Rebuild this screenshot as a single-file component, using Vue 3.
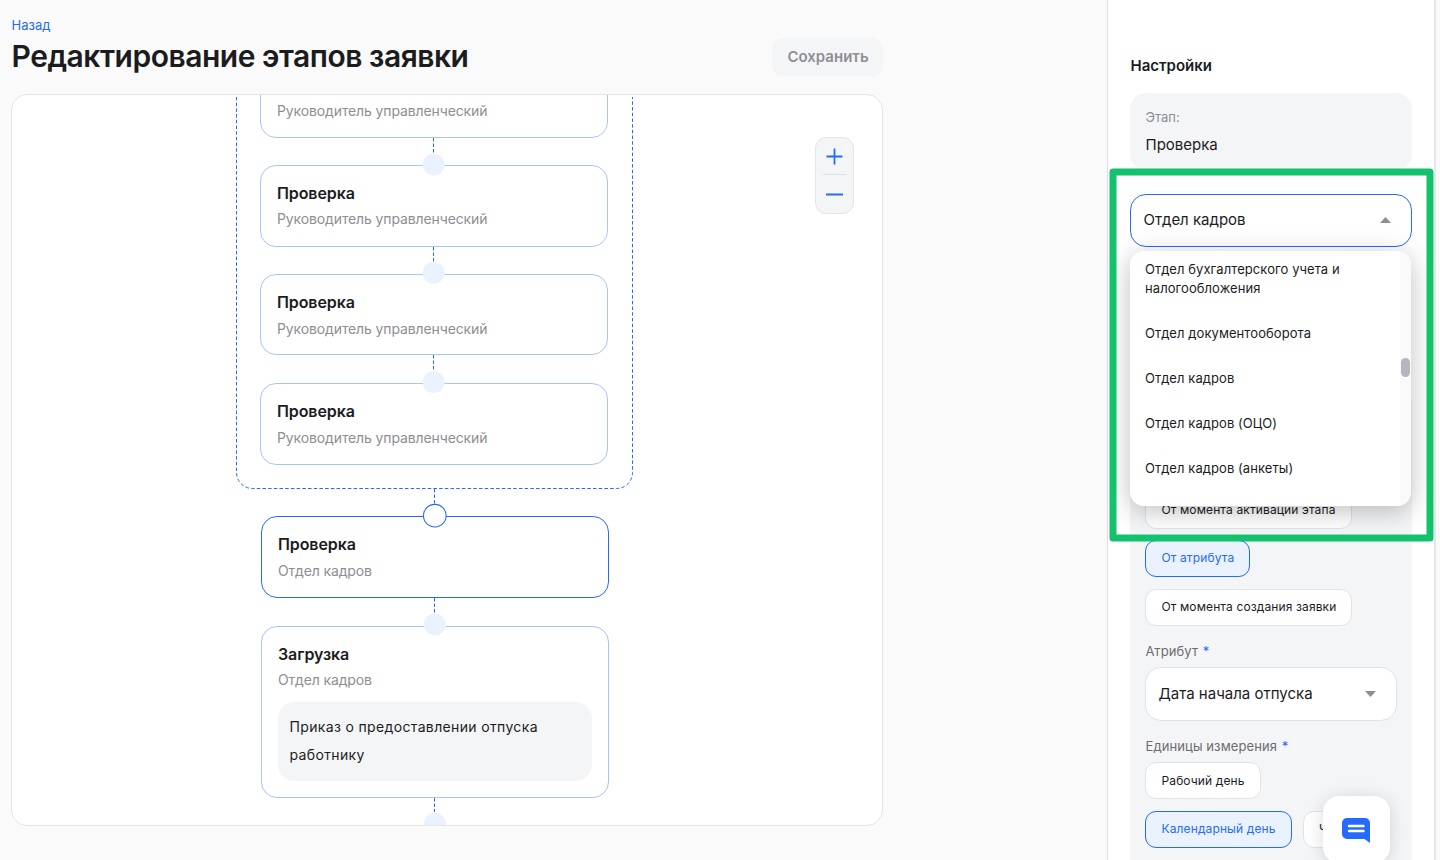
<template>
  <div class="page">
    <main class="main">
      <a class="back" href="#">Назад</a>
      <header class="header">
        <h1 class="title">Редактирование этапов заявки</h1>
        <button class="save" disabled>Сохранить</button>
      </header>

      <section class="canvas">
        <svg class="edges" width="870" height="730" viewBox="12 95 870 730">
          <path class="group" d="M236.5 97V472.5a16 16 0 0 0 16 16H616.5a16 16 0 0 0 16-16V97" />
          <line v-for="(edge, i) in edges" :key="i" class="edge" :x1="edge.x" :x2="edge.x" :y1="edge.from" :y2="edge.to" />
        </svg>

        <div
          v-for="node in nodes"
          :key="node.id"
          class="node"
          :class="{ active: node.active, tight: node.tight, clipped: !node.title }"
          :style="{ left: node.x + 'px', top: node.y + 'px', height: node.h + 'px' }"
        >
          <div v-if="node.title" class="node-title">{{ node.title }}</div>
          <div class="node-role">{{ node.role }}</div>
          <div v-if="node.doc" class="node-doc">{{ node.doc }}</div>
        </div>

        <svg class="edges" width="870" height="730" viewBox="12 95 870 730">
          <circle
            v-for="(port, i) in ports"
            :key="i"
            :class="port.active ? 'port-active' : 'port'"
            :cx="port.x"
            :cy="port.y"
            :r="port.active ? 11.3 : 11"
          />
        </svg>

        <div class="zoom">
          <button class="zoom-btn" aria-label="Увеличить">
            <svg width="17" height="17" viewBox="0 0 17 17"><path d="M8.5 .5v16M.5 8.5h16" /></svg>
          </button>
          <span class="zoom-line"></span>
          <button class="zoom-btn" aria-label="Уменьшить">
            <svg width="17" height="17" viewBox="0 0 17 17"><path d="M0 8.5h17" /></svg>
          </button>
        </div>
      </section>
    </main>

    <aside class="panel">
      <h2 class="panel-title">Настройки</h2>
      <div class="stage">
        <div class="stage-label">Этап:</div>
        <div class="stage-name">Проверка</div>
      </div>

      <div class="department">
        <div class="select open">
          <span>{{ selected }}</span>
          <svg width="11" height="6" viewBox="0 0 11 6"><path d="M0 6 5.5 0 11 6z" /></svg>
        </div>
        <div class="menu">
          <ul class="menu-list">
            <li v-for="item in departments" :key="item" @click="selected = item">{{ item }}</li>
          </ul>
          <div class="track"><div class="thumb"></div></div>
        </div>
      </div>

      <div class="term">
        <div class="chips column">
          <button
            v-for="item in starts"
            :key="item"
            class="chip"
            :class="{ checked: item === start }"
            @click="start = item"
          >{{ item }}</button>
        </div>
        <div class="label">Атрибут <i>*</i></div>
        <div class="select">
          <span>Дата начала отпуска</span>
          <svg class="arrow-down" width="11" height="6" viewBox="0 0 11 6"><path d="M0 0 5.5 6 11 0z" /></svg>
        </div>
        <div class="label">Единицы измерения <i>*</i></div>
        <div class="chips">
          <button
            v-for="item in units"
            :key="item"
            class="chip"
            :class="{ checked: item === unit }"
            @click="unit = item"
          >{{ item }}</button>
        </div>
      </div>
    </aside>

    <svg class="highlight" width="326" height="376" viewBox="0 0 326 376">
      <rect x="5" y="5" width="317" height="366" />
    </svg>

    <button class="chat" aria-label="Чат">
      <svg width="28" height="25" viewBox="0 0 28 25">
        <path fill="#246bfd" d="M5 0h18a5 5 0 0 1 5 5v20l-5.500-4H5a5 5 0 0 1-5-5V5a5 5 0 0 1 5-5z" />
        <path stroke="#fff" stroke-width="2.400" stroke-linecap="round" d="M7 8h14.500M7 13h14.500" />
      </svg>
    </button>
  </div>
</template>

<script setup>
import { ref } from 'vue';

const manager = 'Руководитель управленческий';

// координаты узлов относительно холста
const nodes = [
  { id: 1, x: 248, y: -18, h: 61, role: manager },
  { id: 2, x: 248, y: 70, h: 82, title: 'Проверка', role: manager, tight: true },
  { id: 3, x: 248, y: 179, h: 81, title: 'Проверка', role: manager },
  { id: 4, x: 248, y: 288, h: 82, title: 'Проверка', role: manager },
  { id: 5, x: 249, y: 421, h: 82, title: 'Проверка', role: 'Отдел кадров', active: true },
  { id: 6, x: 249, y: 531, h: 172, title: 'Загрузка', role: 'Отдел кадров', doc: 'Приказ о предоставлении отпуска работнику', tight: true },
];

const edges = [
  { x: 433.5, from: 138, to: 154 },
  { x: 433.5, from: 247, to: 262 },
  { x: 433.5, from: 355, to: 371 },
  { x: 434.5, from: 489, to: 504 },
  { x: 434.5, from: 598, to: 613 },
  { x: 434.5, from: 798, to: 812 },
];

const ports = [
  { x: 433.7, y: 164.5 },
  { x: 433.7, y: 272.8 },
  { x: 433.7, y: 382 },
  { x: 434.8, y: 515.7, active: true },
  { x: 434.8, y: 624.5 },
  { x: 434.8, y: 823.8 },
];

const departments = [
  'Отдел бухгалтерского учета и налогообложения',
  'Отдел документооборота',
  'Отдел кадров',
  'Отдел кадров (ОЦО)',
  'Отдел кадров (анкеты)',
];
const selected = ref('Отдел кадров');

const starts = ['От момента активации этапа', 'От атрибута', 'От момента создания заявки'];
const start = ref('От атрибута');

const units = ['Рабочий день', 'Календарный день', 'Час'];
const unit = ref('Календарный день');
</script>

<style>
body {
  background: #fafafa;
  overflow: hidden;
}
</style>

<style scoped>
* { box-sizing: border-box; }

.page {
  position: relative;
  display: flex;
  justify-content: space-between;
  width: 1440px;
  height: 860px;
  overflow: hidden;
  font-family: Inter, "Liberation Sans", sans-serif;
  color: #1c1c1e;
  background: #fafafa;
}
button { font-family: inherit; cursor: pointer; }

.main {
  width: 883px;
  padding: 16px 0 0 11px;
}
.back {
  display: block;
  height: 18px;
  padding-left: 0.5px;
  font-size: 13px;
  line-height: 18px;
  color: #246bfd;
  text-decoration: none;
}
.header {
  display: flex;
  justify-content: space-between;
  align-items: center;
  height: 44px;
}
.title {
  margin: 0;
  padding-left: 0.5px;
  font-size: 30px;
  font-weight: 600;
  line-height: 40px;
  letter-spacing: -0.48px;
}
.save {
  width: 111px;
  height: 38px;
  margin-top: 2px;
  padding: 0 0 2px 1px;
  border: 0;
  border-radius: 11px;
  background: #f4f5f7;
  color: #8e8e93;
  font-size: 15px;
  font-weight: 600;
}

.canvas {
  position: relative;
  height: 732px;
  margin-top: 16px;
  border: 1px solid #e5e5e8;
  border-radius: 16px;
  background: #fff;
  overflow: hidden;
}
.edges {
  position: absolute;
  top: 0;
  left: 0;
}
.group {
  fill: none;
  stroke: #246bfd;
  stroke-dasharray: 3.5 2.2;
}
.edge {
  stroke: #246bfd;
  stroke-dasharray: 3.5 2;
}
.port { fill: #ebf2ff; }
.port-active {
  fill: #fff;
  stroke: #246bfd;
  stroke-width: 1.1;
}
.node {
  position: absolute;
  width: 348px;
  padding: 16px;
  border: 1px solid #a8c4fd;
  border-radius: 16px;
  background: #fff;
}
.node.active { border-color: #246bfd; }
.node.clipped { padding-top: 17px; }
.node-title {
  font-size: 16px;
  font-weight: 600;
  line-height: 22px;
  letter-spacing: -0.1px;
}
.node-role {
  margin-top: 6px;
  font-size: 14px;
  line-height: 20px;
  letter-spacing: -0.12px;
  color: #8e8e93;
}
.tight .node-role { margin-top: 5px; }
.node-doc {
  width: 314px;
  height: 79px;
  margin-top: 12px;
  padding: 11px 11.5px;
  border-radius: 16px;
  background: #f4f5f7;
  font-size: 14px;
  line-height: 28px;
  letter-spacing: 0.35px;
}

.zoom {
  position: absolute;
  top: 42px;
  right: 28px;
  display: flex;
  flex-direction: column;
  align-items: center;
  width: 39px;
  height: 77px;
  border: 1px solid #e5e5e8;
  border-radius: 11px;
  background: #f4f5f7;
}
.zoom-btn {
  display: flex;
  align-items: center;
  justify-content: center;
  width: 37px;
  height: 36px;
  padding: 1px 1px 0 0;
  border: 0;
  background: none;
}
.zoom-btn:last-child { height: 39px; }
.zoom-btn path {
  stroke: #246bfd;
  stroke-width: 1.8;
}
.zoom-line {
  width: 23px;
  height: 1px;
  background: #e1e1e4;
}

.panel {
  flex-shrink: 0;
  width: 329px;
  height: 860px;
  margin-right: 4px;
  padding: 55px 22px 0;
  border-left: 1px solid #dedee1;
  border-right: 2px solid #e5e5ea;
  background: #fff;
}
.panel-title {
  margin: 0;
  padding-left: 0.5px;
  font-size: 15px;
  font-weight: 600;
  line-height: 22px;
}
.stage {
  width: 282px;
  height: 77px;
  margin-top: 16px;
  padding: 15px 15.5px;
  border-radius: 16px;
  background: #f4f5f7;
}
.stage-label {
  font-size: 13px;
  line-height: 18px;
  color: #8e8e93;
}
.stage-name {
  margin-top: 8px;
  font-size: 15px;
  line-height: 22px;
}
.department {
  position: relative;
  width: 282px;
  margin-top: 24px;
}
.select {
  display: flex;
  align-items: center;
  justify-content: space-between;
  height: 54px;
  padding: 0 20px 2px 12.5px;
  border: 1px solid #e1e3e8;
  border-radius: 16px;
  background: #fff;
  font-size: 15px;
}
.select.open {
  height: 53px;
  border-color: #246bfd;
}
.select svg { fill: #8e8e93; }
.select .arrow-down { margin-top: 2px; }

.menu {
  position: absolute;
  z-index: 2;
  top: 57px;
  left: 0;
  display: flex;
  width: 281px;
  height: 255px;
  border-radius: 14px;
  background: #fff;
  box-shadow: 0 5px 26px rgba(0, 0, 0, 0.25);
  overflow: hidden;
}
.menu-list {
  flex: 1;
  margin: 0;
  padding: 9px 0 0 15px;
  list-style: none;
}
.menu-list li {
  margin-bottom: 26px;
  font-size: 13px;
  line-height: 19px;
  letter-spacing: 0.07px;
  cursor: pointer;
}
.track {
  width: 11px;
  padding: 107px 1px 0;
  background: #fafafa;
}
.thumb {
  width: 9px;
  height: 19px;
  border-radius: 5px;
  background: #b4b6bd;
}

.term {
  width: 282px;
  height: 500px;
  margin-top: 153px;
  padding: 92px 15px 0;
  background: #f4f5f7;
}
.chips {
  display: flex;
  flex-wrap: wrap;
  gap: 12px 11px;
}
.chips.column {
  flex-direction: column;
  align-items: flex-start;
}
.chip {
  height: 37px;
  padding: 0 15px 2px 15.5px;
  border: 1px solid #e1e3e8;
  border-radius: 11px;
  background: #fff;
  color: #1c1c1e;
  font-size: 12px;
  letter-spacing: 0.12px;
  white-space: nowrap;
}
.chips.column .chip:first-child { margin-bottom: -1px; }
.chip.checked {
  border-color: #246bfd;
  background: #ebf2ff;
  color: #246bfd;
}
.chips:not(.column) .chip:first-child { padding-bottom: 1px; }
.label {
  height: 18px;
  margin: 16px 0 7px;
  padding-left: 0.5px;
  font-size: 13px;
  line-height: 18px;
  letter-spacing: 0.1px;
  color: #6c6c70;
}
.label i {
  margin-left: 1px;
  font-style: normal;
  color: #246bfd;
}

/* рамка поверх формы */
.highlight {
  position: absolute;
  z-index: 3;
  top: 167px;
  left: 1108px;
  pointer-events: none;
}
.highlight rect {
  fill: none;
  stroke: #14c16c;
  stroke-width: 7;
  stroke-linejoin: round;
}

.chat {
  position: absolute;
  z-index: 4;
  top: 796px;
  left: 1323px;
  width: 67px;
  height: 67px;
  padding: 2px 1px 0 0;
  border: 0;
  border-radius: 16px;
  background: #fff;
  box-shadow: 0 2px 18px rgba(0, 0, 0, 0.14);
}
.chat svg {
  display: block;
  margin: 0 auto;
  fill: none;
}
</style>
